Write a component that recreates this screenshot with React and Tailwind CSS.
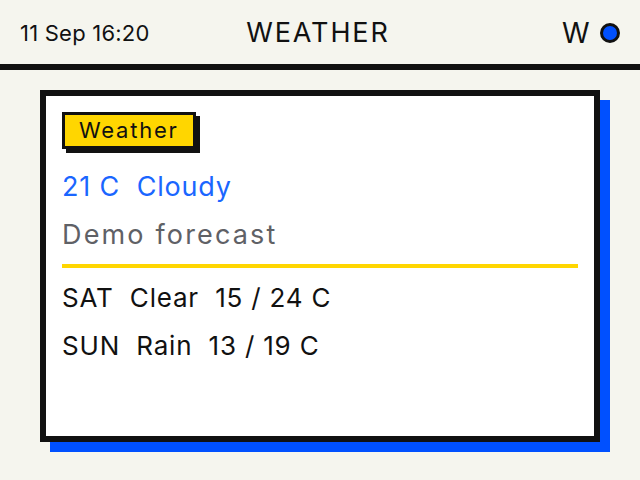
import React from 'react';

const forecast = [
    { day: 'SAT', sky: 'Clear', low: 15, high: 24 },
    { day: 'SUN', sky: 'Rain', low: 13, high: 19 },
];

function App() {
    return (
        <div className="w-[640px] h-[480px] overflow-hidden bg-[#f5f5ee] text-[#111] font-['Inter','Noto_Sans',sans-serif]">
            {/* Top bar */}
            <div className="grid grid-cols-[1fr_auto_1fr] items-center h-[70px] px-5 border-b-[6px] border-[#111]">
                <span className="text-[22px] tracking-[0.01em] pt-[2px]">11 Sep 16:20</span>
                <span className="text-[27px] tracking-[0.07em] pt-[2px] pr-1">WEATHER</span>
                <div className="flex items-center justify-end gap-[9px] pt-[2px]">
                    <span className="text-[28px] tracking-[0.05em]">W</span>
                    <span className="w-5 h-5 rounded-full bg-[#0050ff] border-[3px] border-[#111]" />
                </div>
            </div>

            {/* Card */}
            <div className="px-10 pt-5">
                <div className="h-[352px] bg-white border-[6px] border-[#111] shadow-[10px_10px_0_#0050ff] p-4 tracking-[0.05em]">
                    <span className="inline-block bg-[#ffd600] border-[3px] border-[#111] shadow-[4px_4px_0_#111] px-[14px] leading-[31px] text-[22px] tracking-[0.08em]">
                        Weather
                    </span>
                    <div className="mt-[14px] text-[27px] leading-[48px] text-[#1a66ff]">21 C&nbsp; Cloudy</div>
                    <div className="text-[27px] leading-[48px] tracking-[0.08em] text-[#5f6166]">Demo forecast</div>
                    <div className="h-1 bg-[#ffd600] mt-[5px] mb-[6px]" />
                    {forecast.map((f) => (
                        <div key={f.day} className="text-[26px] leading-[48px]">
                            {f.day}&nbsp; {f.sky}&nbsp; {f.low} / {f.high} C
                        </div>
                    ))}
                </div>
            </div>
        </div>
    );
}

export default App;
